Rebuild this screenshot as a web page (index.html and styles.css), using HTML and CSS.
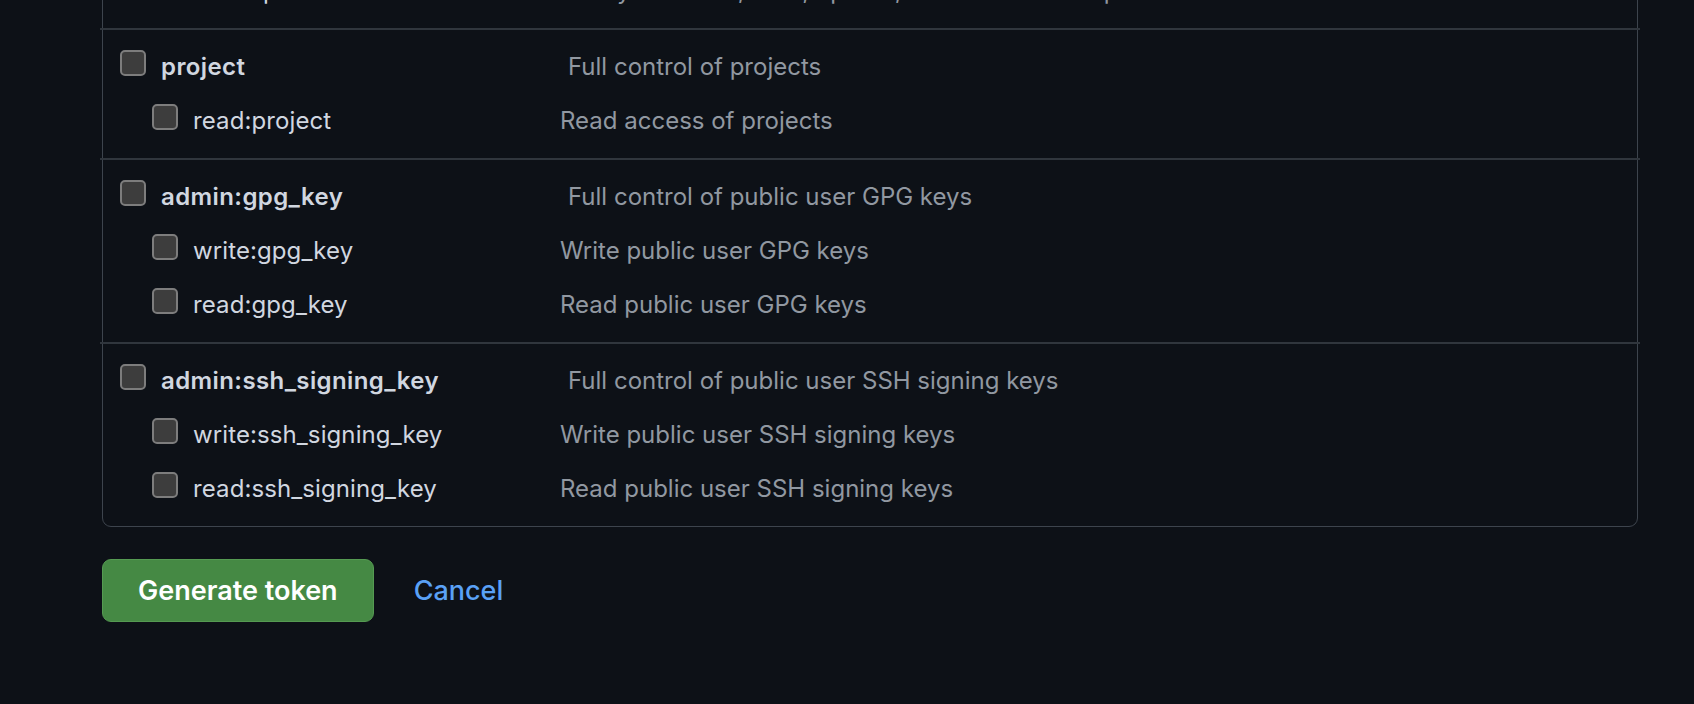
FILE: index.html
```html
<!DOCTYPE html>
<html lang="en">
<head>
<meta charset="utf-8">
<title>Scopes</title>
<link rel="stylesheet" href="styles.css">
</head>
<body>
<main class="page">
  <div class="scopes">
    <div class="group">
      <label class="row child"><input type="checkbox" class="cb"><span class="name">codespace:secrets</span><span class="desc">Ability to create, read, update, and delete codespace secrets</span></label>
    </div>
    <div class="group">
      <label class="row parent"><input type="checkbox" class="cb"><span class="name">project</span><span class="desc">Full control of projects</span></label>
      <label class="row child"><input type="checkbox" class="cb"><span class="name">read:project</span><span class="desc">Read access of projects</span></label>
    </div>
    <div class="group">
      <label class="row parent"><input type="checkbox" class="cb"><span class="name">admin:gpg_key</span><span class="desc">Full control of public user GPG keys</span></label>
      <label class="row child"><input type="checkbox" class="cb"><span class="name">write:gpg_key</span><span class="desc">Write public user GPG keys</span></label>
      <label class="row child"><input type="checkbox" class="cb"><span class="name">read:gpg_key</span><span class="desc">Read public user GPG keys</span></label>
    </div>
    <div class="group">
      <label class="row parent"><input type="checkbox" class="cb"><span class="name">admin:ssh_signing_key</span><span class="desc">Full control of public user SSH signing keys</span></label>
      <label class="row child"><input type="checkbox" class="cb"><span class="name">write:ssh_signing_key</span><span class="desc">Write public user SSH signing keys</span></label>
      <label class="row child"><input type="checkbox" class="cb"><span class="name">read:ssh_signing_key</span><span class="desc">Read public user SSH signing keys</span></label>
    </div>
  </div>
  <div class="actions">
    <button type="button" class="btn-primary">Generate token</button>
    <a href="#" class="link">Cancel</a>
  </div>
</main>
</body>
</html>
```

FILE: styles.css
```css
html, body {
  margin: 0;
  padding: 0;
  background: #0d1117;
}

body {
  font-family: Inter, "Liberation Sans", sans-serif;
  font-size: 24px;
  color: #d1d7e0;
  height: 704px;
  overflow: hidden;
}

.page {
  padding-left: 102px;
  width: 1536px;
}

.scopes {
  margin-top: -47px;
  border: 1px solid #3d444d;
  border-radius: 0 0 9px 9px;
}

.group {
  margin: 0 -3px;
  padding: 6px 3px 14px;
}

.group + .group {
  border-top: 2px solid #30363d;
}

.row {
  display: flex;
  align-items: center;
  height: 54px;
  padding-left: 17px;
  cursor: pointer;
}

.row.child {
  padding-left: 49px;
}

.cb {
  appearance: none;
  -webkit-appearance: none;
  margin: 0;
  flex: 0 0 auto;
  width: 26px;
  height: 26px;
  box-sizing: border-box;
  border: 2px solid #7d7d7d;
  border-radius: 5px;
  background: #3d3d3d;
}

.name {
  margin-left: 15px;
  white-space: nowrap;
  line-height: 30px;
  padding-top: 8px;
  letter-spacing: 0.1px;
}

.parent .name {
  flex: 0 0 407px;
  font-weight: 600;
  letter-spacing: 0.4px;
}

.child .name {
  flex: 0 0 367px;
}

.desc {
  color: #9198a1;
  white-space: nowrap;
  line-height: 30px;
  padding-top: 8px;
}

.actions {
  display: flex;
  align-items: center;
  gap: 40px;
  margin-top: 32px;
}

.btn-primary {
  height: 63px;
  padding: 0 35px;
  border: 1px solid #559a52;
  border-radius: 9px;
  background: #458944;
  color: #ffffff;
  font-family: Inter, "Liberation Sans", sans-serif;
  font-size: 27px;
  font-weight: 600;
  cursor: pointer;
}

.link {
  color: #5aa1f6;
  text-decoration: none;
  font-size: 27px;
  font-weight: 500;
}
```
